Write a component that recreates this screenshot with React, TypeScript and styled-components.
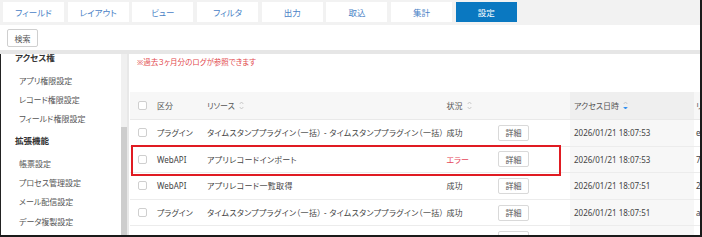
import React from "react";
import styled, { createGlobalStyle } from "styled-components";

const Global = createGlobalStyle`
  html, body { margin: 0; padding: 0; background: #fff; }
  body {
    font-family: "Noto Sans", "Noto Sans CJK JP", sans-serif;
    font-feature-settings: "palt";
    color: #444;
  }
  * { box-sizing: border-box; }
`;

const Frame = styled.div`
  width: 702px;
  height: 237px;
  overflow: hidden;
  display: flex;
  flex-direction: column;
  background: #fff;
  border-right: 2px solid #1a1a1a;
  border-bottom: 2px solid #1a1a1a;
`;

const TabBar = styled.nav`
  flex: none;
  height: 25px;
  background: #f2f2f2;
  display: flex;
  gap: 3.7px;
  padding: 2px 0 0 3px;
`;

const Tab = styled.div<{ $active?: boolean }>`
  width: 61px;
  height: 20px;
  display: flex;
  align-items: center;
  justify-content: center;
  font-size: 8.5px;
  background: ${(p) => (p.$active ? "#0a78c1" : "#fff")};
  color: ${(p) => (p.$active ? "#fff" : "#4a82c6")};
`;

const SearchBar = styled.div`
  flex: none;
  height: 25px;
  padding: 4px 0 0 7px;
`;

const SearchButton = styled.button`
  width: 31px;
  height: 18px;
  padding: 0;
  border: 1px solid #cfcfcf;
  border-radius: 2px;
  background: #fff;
  color: #555;
  font: inherit;
  font-size: 8px;
  display: flex;
  align-items: center;
  justify-content: center;
`;

const Divider = styled.div`
  flex: none;
  height: 4px;
  background: #e6e6e6;
`;

const Body = styled.div`
  flex: 1;
  min-height: 0;
  display: flex;
  border-left: 1px solid #222;
`;

const Sidebar = styled.aside`
  width: 120px;
  flex: none;
  overflow: hidden;
  background: #fff;
`;

const SidebarScroll = styled.div`
  margin-top: -9.5px;
`;

const SectionTitle = styled.div`
  height: 26px;
  line-height: 26px;
  padding-left: 14px;
  font-size: 8.5px;
  font-weight: 700;
  color: #333;
`;

const NavItem = styled.div`
  height: 19.2px;
  line-height: 19.2px;
  padding-left: 18px;
  font-size: 8px;
  color: #555;
`;

const ScrollTrack = styled.div`
  width: 6px;
  flex: none;
  background: #f0f0f0;
  display: flex;
  flex-direction: column;
`;

const ScrollThumb = styled.div`
  margin-top: 73px;
  flex: 1;
  background: #cdcdcd;
`;

const Gutter = styled.div`
  width: 2px;
  flex: none;
  background: #e8e8e8;
`;

const Content = styled.main`
  flex: 1;
  min-width: 0;
  display: flex;
  flex-direction: column;
  padding-top: 3px;
  overflow: hidden;
`;

const Notice = styled.p`
  margin: 0;
  padding-left: 8px;
  height: 10px;
  line-height: 10px;
  font-size: 7.5px;
  color: #e2474d;
`;

const TableWrap = styled.div`
  position: relative;
  margin-top: 25px;
  margin-left: 1px;
`;

const COLS = "20px 50px 242px 49px 79px 124px 1fr";

const HeadRow = styled.div`
  display: grid;
  grid-template-columns: ${COLS};
  height: 28px;
  background: #f7f7f7;
  border-bottom: 1px solid #e9e9e9;
  color: #555;
`;

const Row = styled.div`
  display: grid;
  grid-template-columns: ${COLS};
  height: 26.6px;
  border-bottom: 1px solid #ececec;
`;

const Cell = styled.div<{ $pad?: number; $bg?: string; $color?: string; $clip?: boolean; $spread?: boolean }>`
  display: flex;
  align-items: center;
  gap: 4px;
  min-width: 0;
  padding-left: ${(p) => p.$pad ?? 7}px;
  font-size: 8px;
  white-space: nowrap;
  letter-spacing: ${(p) => (p.$spread ? "0.32px" : "normal")};
  background: ${(p) => p.$bg ?? "transparent"};
  color: ${(p) => p.$color ?? "inherit"};
  overflow: ${(p) => (p.$clip ? "hidden" : "visible")};
`;

const Check = styled.span`
  width: 9px;
  height: 9px;
  border: 1px solid #cfcfcf;
  border-radius: 2px;
  background: #fff;
  flex: none;
`;

const DetailButton = styled.button`
  width: 31px;
  height: 16px;
  padding: 0;
  border: 1px solid #d9d9d9;
  border-radius: 2px;
  background: #fff;
  color: #555;
  font: inherit;
  font-size: 8px;
  display: flex;
  align-items: center;
  justify-content: center;
`;

const Highlight = styled.div`
  position: absolute;
  left: 1px;
  top: 53px;
  width: 430px;
  height: 31px;
  border: 2px solid #e01b22;
  pointer-events: none;
`;

const SortIcon = ({ active }: { active?: boolean }) => (
  <svg width="5" height="9" viewBox="0 0 5 9" style={{ flex: "none" }}>
    <polyline points="0.7,3 2.5,1 4.3,3" fill="none" stroke="#c4c4c4" strokeWidth="0.9" />
    <polyline
      points="0.7,6 2.5,8 4.3,6"
      fill={active ? "#2d8cf0" : "none"}
      stroke={active ? "#2d8cf0" : "#c4c4c4"}
      strokeWidth="0.9"
    />
  </svg>
);

const tabs = ["フィールド", "レイアウト", "ビュー", "フィルタ", "出力", "取込", "集計", "設定"];

const PLUGIN = "タイムスタンププラグイン（一括） - タイムスタンププラグイン（一括）";

const rows = [
  { kind: "プラグイン", res: PLUGIN, status: "成功", err: false, date: "2026/01/21 18:07:53", extra: "e" },
  { kind: "WebAPI", res: "アプリレコードインポート", status: "エラー", err: true, date: "2026/01/21 18:07:53", extra: "7" },
  { kind: "WebAPI", res: "アプリレコード一覧取得", status: "成功", err: false, date: "2026/01/21 18:07:51", extra: "2" },
  { kind: "プラグイン", res: PLUGIN, status: "成功", err: false, date: "2026/01/21 18:07:51", extra: "a" },
  { kind: "WebAPI", res: "アプリレコード一覧取得", status: "成功", err: false, date: "2026/01/21 18:07:50", extra: "e" },
];

export default function App() {
  return (
    <Frame>
      <Global />
      <TabBar>
        {tabs.map((t) => (
          <Tab key={t} $active={t === "設定"}>
            {t}
          </Tab>
        ))}
      </TabBar>
      <SearchBar>
        <SearchButton>検索</SearchButton>
      </SearchBar>
      <Divider />
      <Body>
        <Sidebar>
          <SidebarScroll>
            <SectionTitle>アクセス権</SectionTitle>
            <NavItem>アプリ権限設定</NavItem>
            <NavItem>レコード権限設定</NavItem>
            <NavItem>フィールド権限設定</NavItem>
            <SectionTitle>拡張機能</SectionTitle>
            <NavItem>帳票設定</NavItem>
            <NavItem>プロセス管理設定</NavItem>
            <NavItem>メール配信設定</NavItem>
            <NavItem>データ複製設定</NavItem>
          </SidebarScroll>
        </Sidebar>
        <ScrollTrack>
          <ScrollThumb />
        </ScrollTrack>
        <Gutter />
        <Content>
          <Notice>※過去３ヶ月分のログが参照できます</Notice>
          <TableWrap>
            <HeadRow>
              <Cell $pad={8}>
                <Check />
              </Cell>
              <Cell>区分</Cell>
              <Cell>
                リソース <SortIcon />
              </Cell>
              <Cell $pad={4.5}>
                状況 <SortIcon />
              </Cell>
              <Cell />
              <Cell $pad={4} $bg="#efefef">
                アクセス日時 <SortIcon active />
              </Cell>
              <Cell $pad={2} $clip>
                リクエスト
              </Cell>
            </HeadRow>
            {rows.map((r, i) => (
              <Row key={i}>
                <Cell $pad={8}>
                  <Check />
                </Cell>
                <Cell>{r.kind}</Cell>
                <Cell $spread>{r.res}</Cell>
                <Cell $pad={4.5} $color={r.err ? "#e5485a" : undefined}>
                  {r.status}
                </Cell>
                <Cell>
                  <DetailButton>詳細</DetailButton>
                </Cell>
                <Cell $pad={4} $bg="#f7f7f7">
                  {r.date}
                </Cell>
                <Cell $pad={2} $clip>
                  {r.extra}xxxx
                </Cell>
              </Row>
            ))}
            <Highlight />
          </TableWrap>
        </Content>
      </Body>
    </Frame>
  );
}
